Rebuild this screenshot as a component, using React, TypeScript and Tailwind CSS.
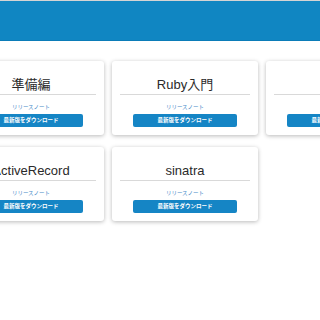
import React from "react";

const cards = [["準備編", "Ruby入門", "Rails"], ["ActiveRecord", "sinatra"]];

function Card({ title }: { title: string }) {
  return (
    <div className="w-[146px] shrink-0 bg-white rounded-[3px] shadow-[0_1px_4px_rgba(0,0,0,0.28)] pt-[14px] pb-[8px] flex flex-col">
      <div className="mx-2 h-[20px] leading-[19px] text-center text-[13px] text-[#2a2a2a] border-b border-[#d9d9d9] whitespace-nowrap">
        {title}
      </div>
      <div className="mt-[8px] h-[8px] leading-[8px] text-center text-[5.5px] text-[#4a8bc9]">リリースノート</div>
      <div className="mt-[3px] mx-[21px] h-[13px] rounded-[2px] bg-[#1585c5] text-white text-[5.5px] font-bold leading-[13px] text-center">
        最新版をダウンロード
      </div>
    </div>
  );
}

export default function App() {
  return (
    <div
      className="w-[320px] h-[320px] overflow-hidden bg-white"
      style={{ fontFamily: '"Liberation Sans", "Noto Sans CJK JP", sans-serif' }}
    >
      <div className="border-t border-[#d4d4d4] h-[41px] bg-[#1086c2] border-b border-b-[#0b7cb8]" />
      <div className="ml-[-42px] mt-[20px] flex flex-col gap-[12px]">
        {cards.map((row, i) => (
          <div key={i} className="flex gap-[8px]">
            {row.map((t) => (
              <Card key={t} title={t} />
            ))}
          </div>
        ))}
      </div>
    </div>
  );
}
